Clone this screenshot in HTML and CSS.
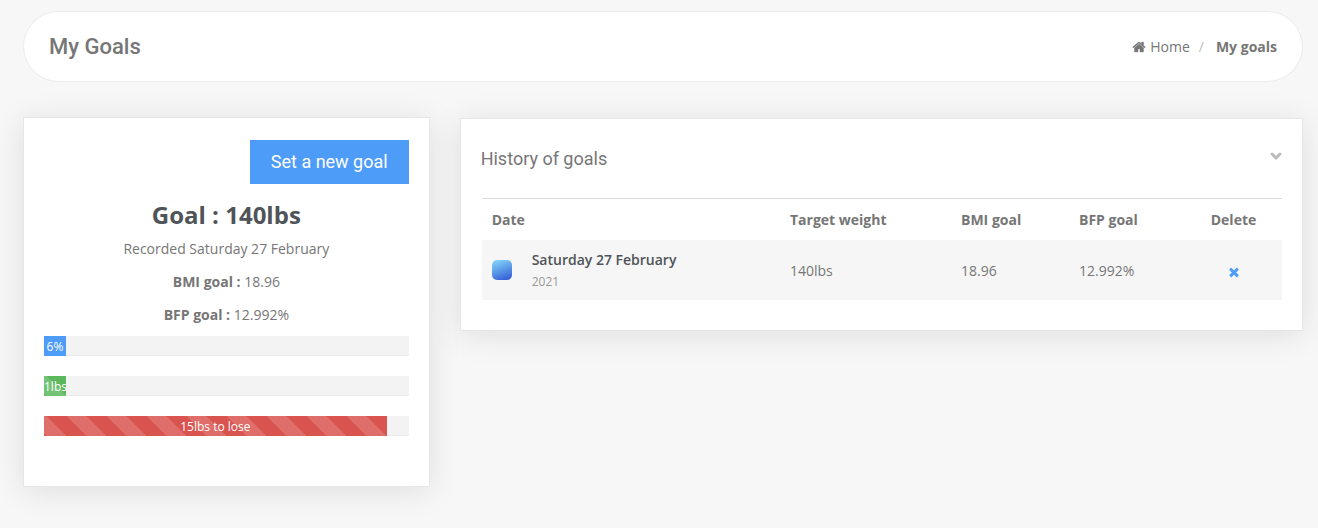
FILE: index.html
```html
<!DOCTYPE html>
<html lang="en">
<head>
  <meta charset="UTF-8">
  <meta name="viewport" content="width=device-width, initial-scale=1">
  <title>My Goals</title>
  <link rel="stylesheet" href="styles.css">
</head>
<body>
  <header class="page-header">
    <h1>My Goals</h1>
    <nav class="breadcrumb" aria-label="Breadcrumb">
      <a href="#">
        <svg class="icon home" viewBox="0 0 1792 1792"><path d="M1472 992v480q0 26-19 45t-45 19h-384v-384h-256v384h-384q-26 0-45-19t-19-45v-480q0-1 .5-3t.5-3l575-474 575 474q1 2 1 6zm223-69l-62 74q-8 9-21 11h-3q-13 0-21-7l-692-577-692 577q-12 8-24 7-13-2-21-11l-62-74q-8-10-7-23.5t11-21.5l719-599q32-26 76-26t76 26l244 204v-195q0-14 9-23t23-9h192q14 0 23 9t9 23v408l219 182q10 8 11 21.5t-7 23.5z"/></svg>
        Home
      </a>
      <span class="separator">/</span>
      <strong>My goals</strong>
    </nav>
  </header>

  <main class="row">
    <section class="card goal">
      <button class="btn-goal" type="button">Set a new goal</button>
      <h2>Goal : 140lbs</h2>
      <p>Recorded Saturday 27 February</p>
      <p><strong>BMI goal :</strong> 18.96</p>
      <p><strong>BFP goal :</strong> 12.992%</p>
      <div class="progress">
        <div class="bar" style="width: 6%">6%</div>
      </div>
      <div class="progress">
        <div class="bar bar-success striped" style="width: 6%">1lbs</div>
      </div>
      <div class="progress">
        <div class="bar bar-danger striped" style="width: 94%">15lbs to lose</div>
      </div>
    </section>

    <section class="card history">
      <div class="card-head">
        <h3>History of goals</h3>
        <button class="toggle" type="button" aria-label="Collapse">
          <svg viewBox="0 0 12 12"><path d="M2 4l4 4 4-4"/></svg>
        </button>
      </div>
      <table>
        <thead>
          <tr>
            <th>Date</th>
            <th class="col-weight">Target weight</th>
            <th class="col-bmi">BMI goal</th>
            <th class="col-bfp">BFP goal</th>
            <th class="col-delete">Delete</th>
          </tr>
        </thead>
        <tbody>
          <tr>
            <td>
              <div class="date">
                <span class="swatch"></span>
                <div>
                  <div class="day">Saturday 27 February</div>
                  <div class="year">2021</div>
                </div>
              </div>
            </td>
            <td>140lbs</td>
            <td>18.96</td>
            <td>12.992%</td>
            <td class="col-delete">
              <button class="delete" type="button" aria-label="Delete goal">
                <svg class="icon" viewBox="0 0 1792 1792"><path d="M1490 1322q0 40-28 68l-136 136q-28 28-68 28t-68-28l-294-294-294 294q-28 28-68 28t-68-28l-136-136q-28-28-28-68t28-68l294-294-294-294q-28-28-28-68t28-68l136-136q28-28 68-28t68 28l294 294 294-294q28-28 68-28t68 28l136 136q28 28 28 68t-28 68l-294 294 294 294q28 28 28 68z"/></svg>
              </button>
            </td>
          </tr>
        </tbody>
      </table>
    </section>
  </main>
</body>
</html>
```
FILE: styles.css
```css
* {
  box-sizing: border-box;
}
body {
  margin: 0;
  padding: 11px 15px 40px 23px;
  background-color: #f7f7f7;
  color: #767676;
  font-family: "Open Sans", Arial, sans-serif;
  font-size: 14px;
  line-height: 23px;
}
h1, h2, h3, p {
  margin: 0;
}
button {
  font: inherit;
  border: none;
  cursor: pointer;
}
svg {
  display: block;
  fill: currentColor;
}
.icon {
  width: 14px;
  height: 14px;
}
.home {
  stroke: currentColor;
  stroke-width: 50;
}
.page-header {
  display: flex;
  justify-content: space-between;
  align-items: center;
  height: 71px;
  padding: 0 25px;
  margin-bottom: 35px;
  background-color: #fff;
  border: 1px solid #ebebeb;
  border-radius: 36px;
}
.page-header h1 {
  font-family: Roboto, sans-serif;
  font-size: 22px;
  font-weight: 500;
}
.breadcrumb {
  display: flex;
}
.breadcrumb a {
  display: flex;
  align-items: center;
  gap: 4px;
  color: inherit;
  text-decoration: none;
}
.breadcrumb .separator {
  padding: 0 12px 0 9px;
  color: #bbb;
}
.row {
  display: grid;
  grid-template-columns: repeat(12, 1fr);
  gap: 30px;
  align-items: start;
}
.card {
  background-color: #fff;
  border: 1px solid #e6e6e6;
  box-shadow: 0 4px 30px rgba(0, 0, 0, 0.1);
}
.goal {
  grid-column: span 4;
  padding: 22px 20px 30px;
  text-align: center;
}
.btn-goal {
  display: block;
  margin-left: auto;
  padding: 10px 21px;
  background-color: #4d9cf8;
  color: #fff;
  font-family: Roboto, sans-serif;
  font-size: 18px;
  line-height: 24px;
}
.goal h2 {
  margin: 14px 0 5px;
  color: #505458;
  font-size: 24px;
  line-height: 34px;
  font-weight: 700;
}
.goal p {
  margin-bottom: 10px;
}
.progress {
  height: 20px;
  margin-bottom: 20px;
  background-color: #f3f3f3;
  box-shadow: inset 0 -1px 0 #eaeaea;
}
.bar {
  height: 100%;
  background-color: #4d9cf8;
  color: #fff;
  font-size: 12px;
  line-height: 22px;
  white-space: nowrap;
}
.bar-success {
  background-color: #5cb85c;
}
.bar-danger {
  background-color: #d9534f;
}
.striped {
  background-image: linear-gradient(45deg, rgba(255, 255, 255, 0.15) 25%, transparent 25%, transparent 50%, rgba(255, 255, 255, 0.15) 50%, rgba(255, 255, 255, 0.15) 75%, transparent 75%, transparent);
  background-position: -17px 0;
  background-size: 40px 40px;
}
.history {
  grid-column: span 8;
  margin-top: 1px;
  padding: 20px 20px 30px;
}
.card-head {
  display: flex;
  justify-content: space-between;
  align-items: center;
  margin-bottom: 19px;
}
.card-head h3 {
  font-family: Roboto, sans-serif;
  font-size: 18px;
  line-height: 40px;
  font-weight: 400;
}
.toggle {
  padding: 0 0 6px;
  background: none;
  color: #bbb;
}
.toggle svg {
  width: 12px;
  height: 12px;
  fill: none;
  stroke: currentColor;
  stroke-width: 3;
  stroke-linecap: round;
}
table {
  width: 100%;
  border-collapse: separate;
  border-spacing: 0;
  border-left: 1px solid #fff;
  table-layout: fixed;
}
th, td {
  padding: 0 10px;
  text-align: left;
}
th {
  height: 42px;
  border-top: 1px solid #ddd;
}
td {
  height: 60px;
  background-color: #f6f6f6;
}
.col-weight {
  width: 171px;
}
.col-bmi {
  width: 118px;
}
.col-bfp {
  width: 116px;
}
.col-delete {
  width: 97px;
  text-align: center;
}
.date {
  display: flex;
  align-items: center;
  gap: 20px;
}
.swatch {
  width: 20px;
  height: 20px;
  border-radius: 5px;
  background-image: linear-gradient(160deg, #86dcfb, #2f55d4);
}
.day {
  color: #505458;
  font-weight: 600;
}
.year {
  color: #999;
  font-size: 12px;
  line-height: 22px;
}
.delete {
  padding: 0;
  background: none;
  color: #4d9cf8;
  vertical-align: middle;
}
```
